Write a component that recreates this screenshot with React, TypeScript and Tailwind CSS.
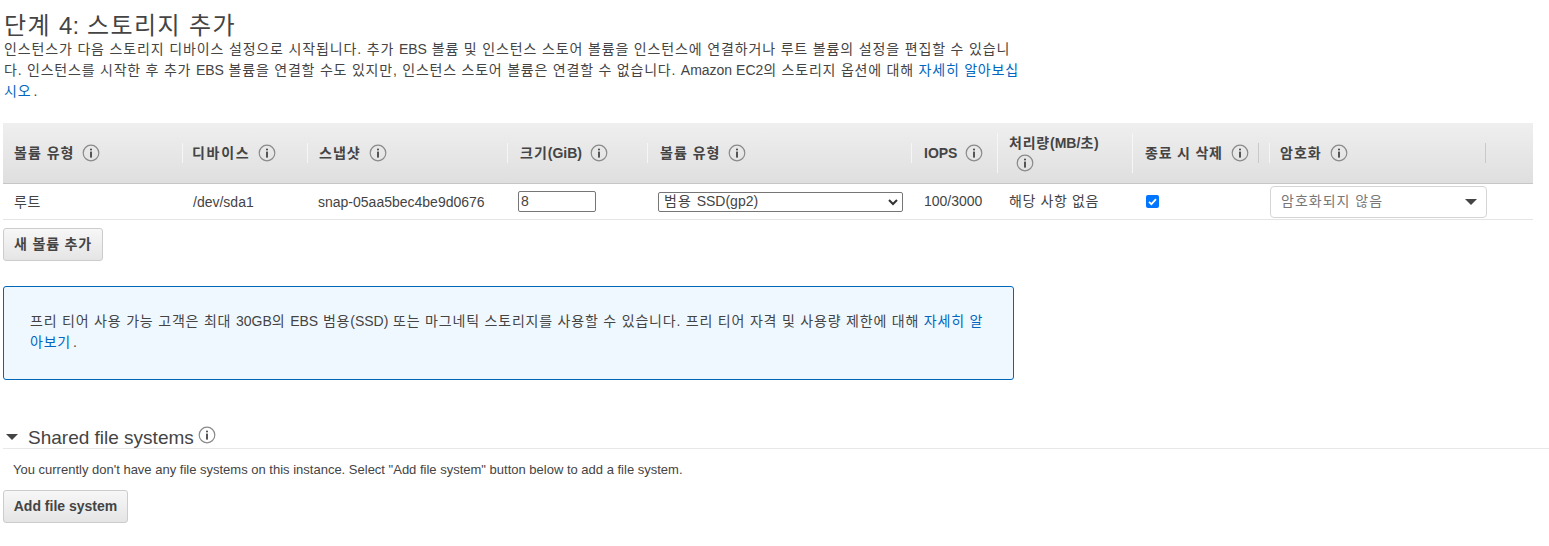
import React from 'react';

const FONT = "font-['Liberation_Sans','Noto_Sans_CJK_KR',sans-serif]";

const InfoIcon = ({ className = '' }: { className?: string }) => (
  <svg viewBox="0 0 18 18" className={`h-[18px] w-[18px] shrink-0 ${className}`}>
    <circle cx="9" cy="9" r="7.8" fill="none" stroke="#8a8a8a" strokeWidth="1.2" />
    <circle cx="9" cy="5.4" r="1" fill="#444" />
    <rect x="8.1" y="7.6" width="1.8" height="6" fill="#444" />
  </svg>
);

// hangul runs wider than Noto here, latin keeps normal spacing
const Lat = ({ children }: { children: React.ReactNode }) => <span className="tracking-normal">{children}</span>;

const columns: { label: React.ReactNode; cls: string; track?: string }[] = [
  { label: '볼륨 유형', cls: 'w-[180px] pl-[11px] border-r' },
  { label: '디바이스', cls: 'w-[125px] pl-[9px] border-r', track: 'tracking-[1.7px]' },
  { label: '스냅샷', cls: 'w-[200px] pl-[11px] border-r' },
  { label: <>크기<Lat>(GiB)</Lat></>, cls: 'w-[140px] pl-[12px] border-r' },
  { label: '볼륨 유형', cls: 'w-[264px] pl-[12px] border-r' },
  { label: <Lat>IOPS</Lat>, cls: 'w-[85px] pl-[12px]' },
];

const HeaderCell = ({ label, cls, track = 'tracking-[1px]' }: { label: React.ReactNode; cls: string; track?: string }) => (
  <div className={`flex h-[20px] items-center gap-[8px] border-r-[#f6f6f6] ${cls}`}>
    <span className={`text-[14px] font-bold text-[#444] ${track}`}>{label}</span>
    <InfoIcon />
  </div>
);

const Button = ({ children, className = '' }: { children: React.ReactNode; className?: string }) => (
  <button className={`h-[33px] rounded-[3px] border border-[#ccc] bg-gradient-to-b from-[#f7f7f7] to-[#e5e5e5] text-[14px] font-bold text-[#444] ${className}`}>
    {children}
  </button>
);

export default function App() {
  return (
    <div className={`h-[546px] w-[1549px] overflow-hidden bg-white pt-[13px] text-[14px] text-[#444] ${FONT}`}>
      <h1 className="pl-[4px] text-[24px] leading-[26px] tracking-[1.4px] text-[#444]">
        단계 <Lat>4:</Lat> 스토리지 추가
      </h1>
      <div className="w-[1040px] pl-[4px] leading-[21px] text-[#444]">
        <div className="tracking-[0.85px]">
          인스턴스가 다음 스토리지 디바이스 설정으로 시작됩니다. 추가 <Lat>EBS</Lat> 볼륨 및 인스턴스 스토어 볼륨을 인스턴스에 연결하거나 루트 볼륨의 설정을 편집할 수 있습니
        </div>
        <div className="tracking-[0.78px]">
          다. 인스턴스를 시작한 후 추가 <Lat>EBS</Lat> 볼륨을 연결할 수도 있지만, 인스턴스 스토어 볼륨은 연결할 수 없습니다. <Lat>Amazon EC2</Lat>의 스토리지 옵션에 대해{' '}
          <a className="text-[#0066c0]">자세히 알아보십</a>
        </div>
        <div className="tracking-[0.85px]">
          <a className="text-[#0066c0]">시오</a>
          <span className="ml-[2px]">.</span>
        </div>
      </div>

      <div className="ml-[3px] mt-[21px] w-[1530px]">
        <div className="flex h-[61px] items-center border-b border-b-[#c6c6c6] bg-gradient-to-b from-[#efefef] to-[#dfdfdf]">
          {columns.map((col, i) => (
            <HeaderCell key={i} {...col} />
          ))}
          <div className="flex h-[40px] w-[136px] flex-col items-start border-x border-x-[#f6f6f6] pl-[11px]">
            <span className="text-[14px] font-bold leading-[20px] tracking-[0.8px] text-[#444]">
              처리량<Lat>(MB/</Lat>초<Lat>)</Lat>
            </span>
            <InfoIcon className="ml-[7px] mt-[1px]" />
          </div>
          <div className="flex h-[20px] w-[126px] items-center gap-[8px] border-r border-r-[#c9c9c9] pl-[12px]">
            <span className="text-[14px] font-bold tracking-[0.8px] text-[#444]">종료 시 삭제</span>
            <InfoIcon />
          </div>
          <div className="ml-[10px] flex h-[20px] w-[217px] items-center gap-[8px] border-x border-l-[#f6f6f6] border-r-[#c9c9c9] pl-[10px]">
            <span className="text-[14px] font-bold tracking-[1px] text-[#444]">암호화</span>
            <InfoIcon />
          </div>
        </div>

        <div className="flex h-[36px] items-center border-b border-b-[#e5e5e5]">
          <div className="w-[180px] pl-[11px] pt-[1px] tracking-[0.5px]">루트</div>
          <div className="w-[125px] pl-[10px] pt-[1px]">/dev/sda1</div>
          <div className="w-[200px] pl-[10px] pt-[1px]">snap-05aa5bec4be9d0676</div>
          <div className="w-[140px] pl-[10px]">
            <input
              readOnly
              value="8"
              className="h-[21px] w-[78px] rounded-[2px] border border-[#767676] px-[2px] text-[14px] text-[#444] outline-none"
            />
          </div>
          <div className="w-[264px] pl-[10px]">
            <div className="flex h-[20px] w-[245px] items-center justify-between rounded-[2px] border border-[#767676] pl-[5px] pr-[3px]">
              <span className="tracking-[1px]">
                범용 <Lat>SSD(gp2)</Lat>
              </span>
              <svg viewBox="0 0 12 12" className="h-[12px] w-[12px]">
                <path d="M2 4l4 4 4-4" fill="none" stroke="#333" strokeWidth="2" />
              </svg>
            </div>
          </div>
          <div className="w-[85px] pl-[12px]">100/3000</div>
          <div className="w-[135px] pl-[12px] tracking-[0.6px]">해당 사항 없음</div>
          <div className="flex w-[138px] items-center pl-[14px]">
            <svg viewBox="0 0 13 13" className="h-[13px] w-[13px]">
              <rect width="13" height="13" rx="2" fill="#0075ff" />
              <path d="M3 6.8l2.4 2.4 4.6-5" fill="none" stroke="#fff" strokeWidth="1.8" />
            </svg>
          </div>
          <div className="flex h-[32px] w-[217px] items-center justify-between rounded-[4px] border border-[#d5d5d5] pl-[10px] pr-[9px] tracking-[1px] text-[#777]">
            <span>암호화되지 않음</span>
            <span className="h-0 w-0 border-x-[6px] border-t-[6px] border-x-transparent border-t-[#444]" />
          </div>
        </div>
      </div>

      <Button className="ml-[3px] mt-[8px] w-[100px] tracking-[0.8px]">새 볼륨 추가</Button>

      <div className="ml-[3px] mt-[25px] flex h-[94px] w-[1011px] flex-col justify-center rounded-[3px] border border-[#0066b8] bg-[#f0f8ff] pb-[2px] pl-[26px] pr-[10px] leading-[21px] tracking-[0.8px]">
        <div>
          프리 티어 사용 가능 고객은 최대 <Lat>30GB</Lat>의 <Lat>EBS</Lat> 범용<Lat>(SSD)</Lat> 또는 마그네틱 스토리지를 사용할 수 있습니다. 프리 티어 자격 및 사용량 제한에 대해{' '}
          <a className="text-[#0066c0]">자세히 알</a>
        </div>
        <div>
          <a className="text-[#0066c0]">아보기</a>
          <span className="ml-[2px]">.</span>
        </div>
      </div>

      <div className="ml-[3px] mt-[45px] flex h-[24px] items-center border-b border-b-[#e8e8e8]">
        <span className="ml-[3px] h-0 w-0 border-x-[6px] border-t-[6px] border-x-transparent border-t-[#444]" />
        <span className="ml-[10px] pt-[3px] text-[19px] text-[#444]">Shared file systems</span>
        <InfoIcon className="ml-[4px] -translate-y-[2px]" />
      </div>
      <p className="ml-[13px] mt-[13px] text-[13px] leading-[16px] text-[#444]">
        You currently don't have any file systems on this instance. Select "Add file system" button below to add a file system.
      </p>
      <Button className="ml-[3px] mt-[12px] w-[125px]">Add file system</Button>
    </div>
  );
}
